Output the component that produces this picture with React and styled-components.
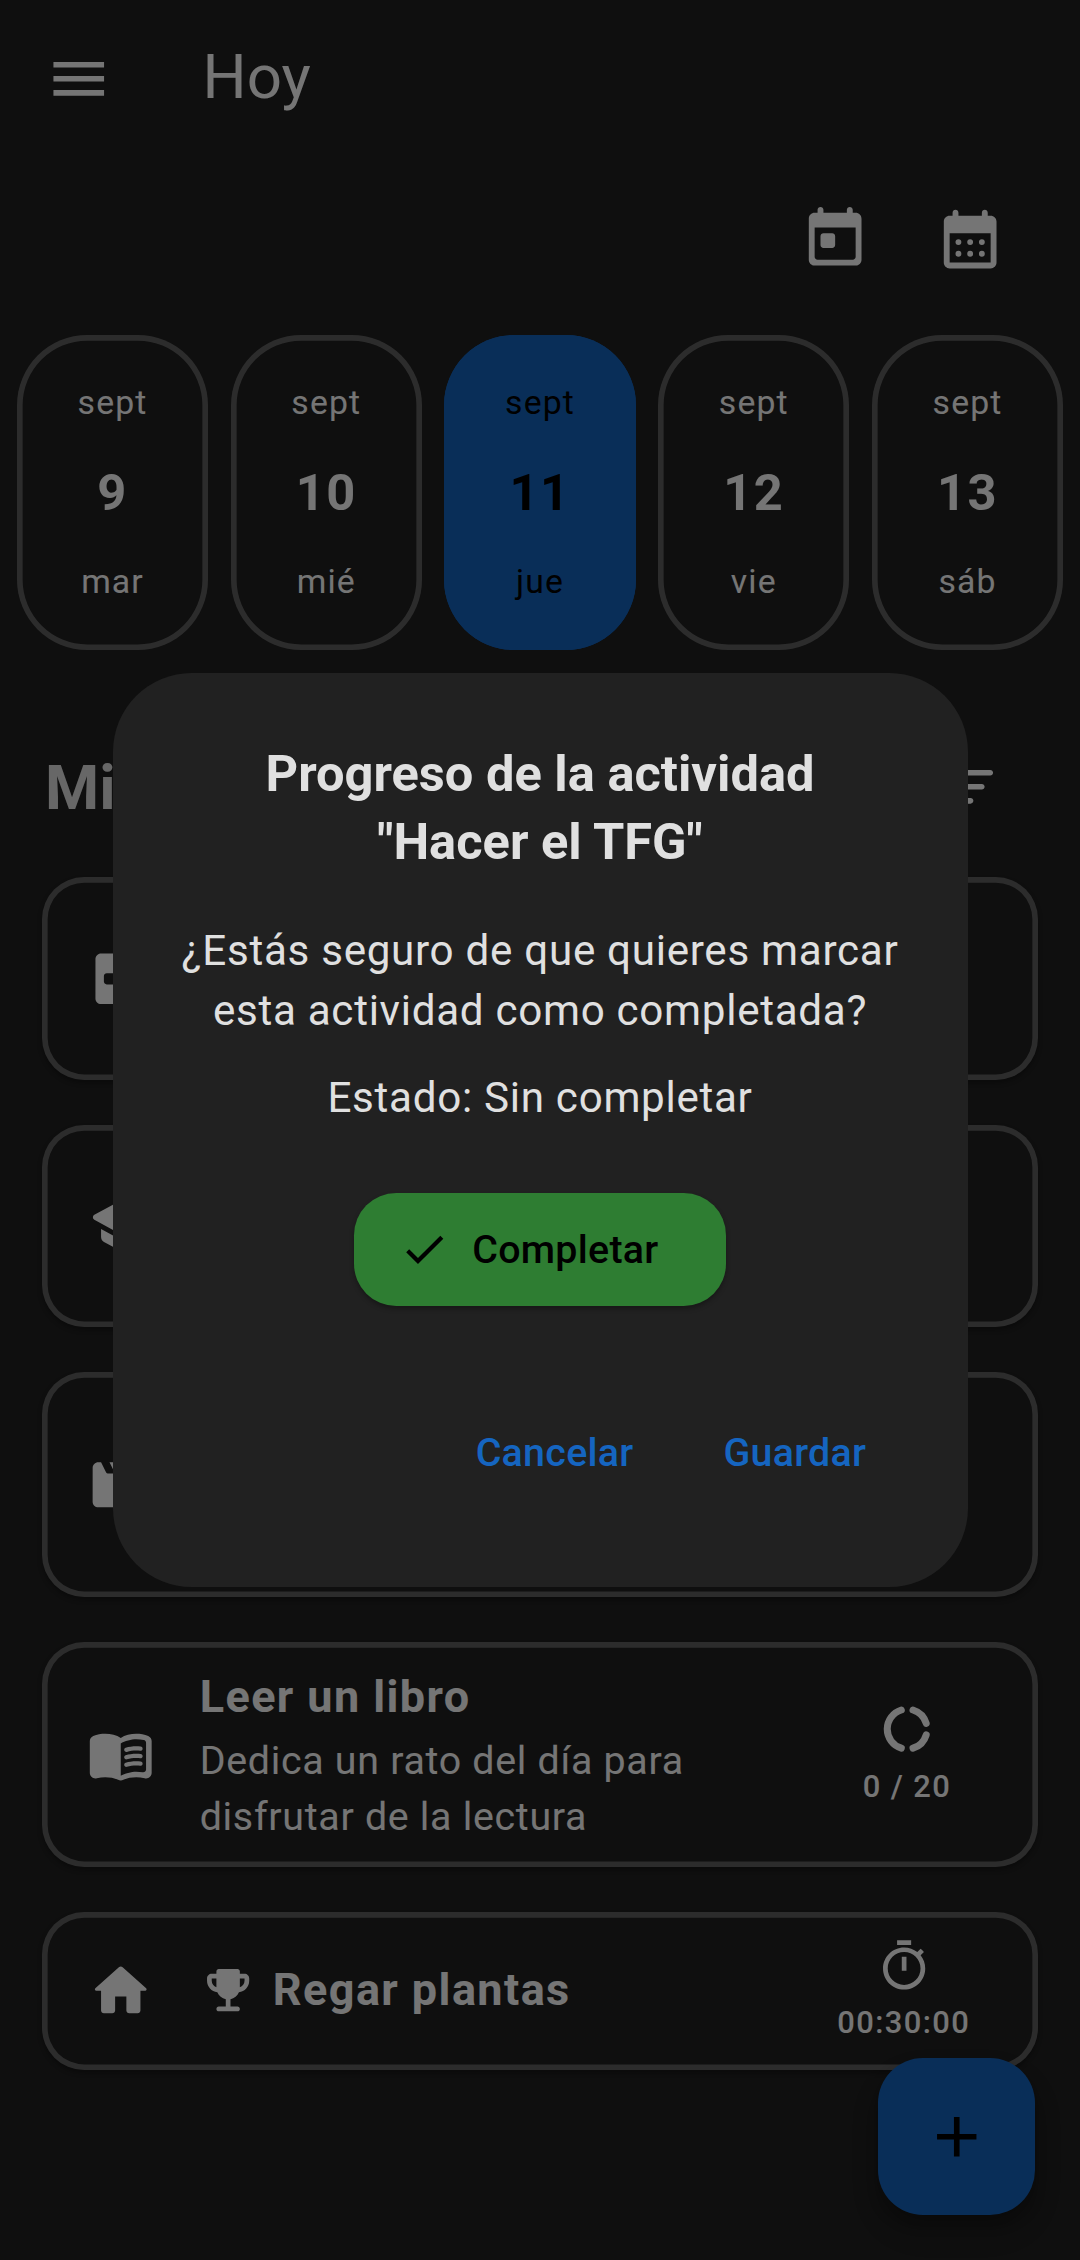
import React from "react";
import styled, { createGlobalStyle } from "styled-components";

const GlobalStyle = createGlobalStyle`
  * { box-sizing: border-box; }
  body { margin: 0; background: #212121; }
  button { font: inherit; border: 0; padding: 0; margin: 0; background: none; letter-spacing: inherit; }
`;

const Screen = styled.div`
  position: relative;
  width: 1080px;
  height: 2260px;
  overflow: hidden;
  background: #212121;
  color: #fff;
  font-family: Roboto, "Liberation Sans", sans-serif;
  letter-spacing: 1.40625px;
`;

const Svg = styled.svg`
  display: block;
  flex: none;
  width: ${(p) => p.$size}px;
  height: ${(p) => p.$size}px;
  fill: currentColor;
`;

const AppBar = styled.header`
  display: flex;
  align-items: center;
  gap: 90px;
  height: 157.5px;
  padding-left: 45px;
`;

const AppTitle = styled.h1`
  margin: 0;
  padding-bottom: 4px;
  font-size: 61.875px;
  line-height: 78px;
  font-weight: 400;
  letter-spacing: 0;
`;

const CalendarActions = styled.div`
  display: flex;
  justify-content: flex-end;
  align-items: center;
  gap: 64.7px;
  height: 163px;
  padding-right: 74.5px;
`;

const IconButton = styled.button`
  display: flex;
  color: inherit;
`;

const DayStrip = styled.div`
  display: flex;
  gap: 22.5px;
  padding: 14.2px 16.9px 0;
`;

const Day = styled.button`
  display: flex;
  flex-direction: column;
  align-items: center;
  justify-content: space-between;
  flex: none;
  width: 191.25px;
  height: 315px;
  padding: 45px 0 46px;
  border-radius: 70.3px;
  line-height: 45px;
  font-size: 33.75px;
  letter-spacing: 1.125px;
  color: ${(p) => (p.$selected ? "#000" : "#fff")};
  background: ${(p) => (p.$selected ? "#1565c0" : "transparent")};
  box-shadow: inset 0 0 0 5.625px ${(p) => (p.$selected ? "#1565c0" : "#616161")};
`;

const DayNumber = styled.span`
  padding-top: 1px;
  font-size: 50.625px;
  font-weight: 700;
  letter-spacing: 1.40625px;
`;

const ListHeader = styled.div`
  display: flex;
  align-items: center;
  justify-content: space-between;
  height: 135px;
  margin-top: 70px;
  padding: 0 78.8px 0 45px;
`;

const Heading = styled.h2`
  margin: 0;
  padding-top: 2px;
  font-size: 61.875px;
  line-height: 78px;
  font-weight: 700;
  letter-spacing: 0;
  color: #e0e0e0;
`;

const List = styled.div`
  display: flex;
  flex-direction: column;
  gap: 45px;
  padding: 22.8px 42.2px 0;
`;

const Card = styled.article`
  display: flex;
  align-items: center;
  gap: 45px;
  height: ${(p) => p.$height}px;
  padding: 0 67.5px 0 45px;
  border-radius: 42.2px;
  background: #212121;
  box-shadow: inset 0 0 0 5.625px #616161, 0 3px 5px rgba(0, 0, 0, 0.3);
`;

const CardBody = styled.div`
  flex: 1;
  min-width: 0;
`;

const CardTitle = styled.h3`
  display: flex;
  align-items: center;
  gap: 16.9px;
  margin: 0;
  padding-bottom: 2px;
  font-size: 45px;
  line-height: 66px;
  font-weight: 700;
`;

const CardText = styled.p`
  width: 520px;
  margin: 1px 0 0;
  font-size: 39.375px;
  line-height: 56.25px;
  letter-spacing: 0.703px;
`;

const Goal = styled.div`
  display: flex;
  flex-direction: column;
  align-items: center;
  min-width: 126.6px;
  font-size: 30.9375px;
  line-height: 45px;
  font-weight: 500;
  gap: 6px;
`;

const Fab = styled.button`
  position: absolute;
  right: 45px;
  bottom: 45px;
  display: flex;
  align-items: center;
  justify-content: center;
  width: 157.5px;
  height: 157.5px;
  border-radius: 45px;
  background: #1565c0;
  color: #000;
  box-shadow: 0 8px 14px rgba(0, 0, 0, 0.25), 0 17px 28px rgba(0, 0, 0, 0.16);
`;

const Backdrop = styled.div`
  position: absolute;
  inset: 0;
  display: flex;
  align-items: center;
  justify-content: center;
  background: rgba(0, 0, 0, 0.54);
`;

const Dialog = styled.section`
  display: flex;
  flex-direction: column;
  align-items: center;
  width: 855px;
  height: 914px;
  padding: 66.5px 67.5px 67.5px;
  border-radius: 78.75px;
  background: #212121;
  color: #e0e0e0;
  text-align: center;
`;

const DialogTitle = styled.h2`
  margin: 0;
  font-size: 50.625px;
  line-height: 68px;
  font-weight: 700;
  letter-spacing: 0;
`;

const DialogText = styled.p`
  margin: ${(p) => p.$top}px 0 0;
  font-size: 42.1875px;
  line-height: 60px;
  letter-spacing: 0.703px;
`;

const CompleteButton = styled.button`
  display: flex;
  align-items: center;
  gap: 22.5px;
  height: 112.5px;
  margin-top: 65px;
  padding: 0 67.5px 0 45px;
  border-radius: 42.2px;
  background: #2e7d32;
  color: #000;
  font-size: 39.375px;
  font-weight: 500;
  letter-spacing: 0.28px;
  box-shadow: 0 3px 5px rgba(0, 0, 0, 0.3);
`;

const DialogActions = styled.div`
  display: flex;
  align-self: stretch;
  justify-content: flex-end;
  gap: 22.5px;
  margin-top: auto;
`;

const TextButton = styled.button`
  height: 135px;
  padding: 0 33.75px;
  color: #1565c0;
  font-size: 39.375px;
  font-weight: 500;
  letter-spacing: 0.28px;
`;

const paths = {
  menu: "M3 18h18v-2H3v2zm0-5h18v-2H3v2zm0-7v2h18V6H3z",
  today:
    "M19 3h-1V2c0-.55-.45-1-1-1s-1 .45-1 1v1H8V2c0-.55-.45-1-1-1s-1 .45-1 1v1H5c-1.11 0-1.99.9-1.99 2L3 19c0 1.1.89 2 2 2h14c1.1 0 2-.9 2-2V5c0-1.1-.9-2-2-2zm-1 16H6c-.55 0-1-.45-1-1V8h14v10c0 .55-.45 1-1 1zM8 10h3c.55 0 1 .45 1 1v3c0 .55-.45 1-1 1H8c-.55 0-1-.45-1-1v-3c0-.55.45-1 1-1z",
  month:
    "M17 2c-.55 0-1 .45-1 1v1H8V3c0-.55-.45-1-1-1s-1 .45-1 1v1H5c-1.11 0-1.99.9-1.99 2L3 20c0 1.1.89 2 2 2h14c1.1 0 2-.9 2-2V6c0-1.1-.9-2-2-2h-1V3c0-.55-.45-1-1-1zm2 18H5V10h14v10zM11 13a1 1 0 1 1 2 0a1 1 0 1 1-2 0zM7 13a1 1 0 1 1 2 0a1 1 0 1 1-2 0zM15 13a1 1 0 1 1 2 0a1 1 0 1 1-2 0zM11 17a1 1 0 1 1 2 0a1 1 0 1 1-2 0zM7 17a1 1 0 1 1 2 0a1 1 0 1 1-2 0zM15 17a1 1 0 1 1 2 0a1 1 0 1 1-2 0z",
  filter:
    "M11 18h2c.55 0 1-.45 1-1s-.45-1-1-1h-2c-.55 0-1 .45-1 1s.45 1 1 1zM3 7c0 .55.45 1 1 1h16c.55 0 1-.45 1-1s-.45-1-1-1H4c-.55 0-1 .45-1 1zm4 6h10c.55 0 1-.45 1-1s-.45-1-1-1H7c-.55 0-1 .45-1 1s.45 1 1 1z",
  hospital:
    "M19 3H5c-1.1 0-1.99.9-1.99 2L3 19c0 1.1.9 2 2 2h14c1.1 0 2-.9 2-2V5c0-1.1-.9-2-2-2zm-2 11h-3v3c0 .55-.45 1-1 1h-2c-.55 0-1-.45-1-1v-3H7c-.55 0-1-.45-1-1v-2c0-.55.45-1 1-1h3V7c0-.55.45-1 1-1h2c.55 0 1 .45 1 1v3h3c.55 0 1 .45 1 1v2c0 .55-.45 1-1 1z",
  school:
    "M5 13.18v2.81c0 .73.4 1.41 1.04 1.76l5 2.73c.6.33 1.32.33 1.92 0l5-2.73c.64-.35 1.04-1.03 1.04-1.76v-2.81l-6.04 3.3c-.6.33-1.32.33-1.92 0L5 13.18zm6.04-9.66-8.43 4.6c-.69.38-.69 1.38 0 1.76l8.43 4.6c.6.33 1.32.33 1.92 0L21 10.09V16c0 .55.45 1 1 1s1-.45 1-1V9.59c0-.37-.2-.7-.52-.88l-9.52-5.19c-.6-.32-1.32-.32-1.92 0z",
  movie:
    "M18 4l1.82 3.64c.08.16-.04.36-.22.36h-1.98c-.38 0-.73-.21-.89-.55L15 4h-2l1.82 3.64c.08.16-.04.36-.22.36h-1.98c-.38 0-.73-.21-.89-.55L10 4H8l1.82 3.64c.08.16-.04.36-.22.36H7.62c-.38 0-.73-.21-.9-.55L5 4H4c-1.1 0-1.99.9-1.99 2L2 18c0 1.1.9 2 2 2h16c1.1 0 2-.9 2-2V5c0-.55-.45-1-1-1h-3z",
  home: "M10 19v-5h4v5c0 .55.45 1 1 1h3c.55 0 1-.45 1-1v-7h1.7c.46 0 .68-.57.33-.87L12.67 3.6c-.38-.34-.96-.34-1.34 0l-8.36 7.53c-.34.3-.13.87.33.87H5v7c0 .55.45 1 1 1h3c.55 0 1-.45 1-1z",
  book: "M17.5 4.5c-1.95 0-4.05.4-5.5 1.5-1.45-1.1-3.55-1.5-5.5-1.5-1.45 0-2.99.22-4.28.79C1.49 5.62 1 6.33 1 7.14v11.28c0 1.3 1.22 2.26 2.48 1.94.98-.25 2.02-.36 3.02-.36 1.56 0 3.22.26 4.56.92.6.3 1.28.3 1.87 0 1.34-.67 3-.92 4.56-.92 1 0 2.04.11 3.02.36 1.26.33 2.48-.63 2.48-1.94V7.14c0-.81-.49-1.52-1.22-1.85-1.28-.57-2.82-.79-4.27-.79zM21 17.23c0 .63-.58 1.09-1.2.98-.75-.14-1.53-.2-2.3-.2-1.7 0-4.15.65-5.5 1.49V8c1.35-.85 3.8-1.5 5.5-1.5.92 0 1.83.09 2.7.28.46.1.8.51.8.98v9.47zM13.98 11.01c-.32 0-.61-.2-.71-.52-.13-.39.09-.82.48-.94 1.54-.5 3.53-.66 5.36-.45.41.05.71.42.66.83-.05.41-.42.71-.83.66-1.62-.19-3.39-.04-4.73.39-.08.01-.16.03-.23.03zM13.98 13.67c-.32 0-.61-.2-.71-.52-.13-.39.09-.82.48-.94 1.53-.5 3.53-.66 5.36-.45.41.05.71.42.66.83-.05.41-.42.71-.83.66-1.62-.19-3.39-.04-4.73.39-.08.02-.16.03-.23.03zM13.98 16.33c-.32 0-.61-.2-.71-.52-.13-.39.09-.82.48-.94 1.53-.5 3.53-.66 5.36-.45.41.05.71.42.66.83-.05.41-.42.7-.83.66-1.62-.19-3.39-.04-4.73.39-.08.02-.16.03-.23.03z",
  trophy:
    "M19 5h-2V4c0-.55-.45-1-1-1H8c-.55 0-1 .45-1 1v1H5c-1.1 0-2 .9-2 2v1c0 2.55 1.92 4.63 4.39 4.94.63 1.5 1.98 2.63 3.61 2.96V19H8c-.55 0-1 .45-1 1s.45 1 1 1h8c.55 0 1-.45 1-1s-.45-1-1-1h-3v-3.1c1.63-.33 2.98-1.46 3.61-2.96C19.08 12.63 21 10.55 21 8V7c0-1.1-.9-2-2-2zM5 8V7h2v3.82C5.84 10.4 5 9.3 5 8zm14 0c0 1.3-.84 2.4-2 2.82V7h2v1z",
  timer:
    "M15 1H9v2h6V1zm-4 13h2V8h-2v6zm8.03-6.61 1.42-1.42c-.43-.51-.9-.99-1.41-1.41l-1.42 1.42C16.07 4.74 14.12 4 12 4c-4.97 0-9 4.03-9 9s4.02 9 9 9 9-4.03 9-9c0-2.12-.74-4.07-1.97-5.61zM12 20c-3.87 0-7-3.13-7-7s3.13-7 7-7 7 3.13 7 7-3.13 7-7 7z",
  check: "M9 16.17 4.83 12l-1.42 1.41L9 19 21 7l-1.41-1.41z",
  add: "M19 13h-6v6h-2v-6H5v-2h6V5h2v6h6v2z",
};

function Icon({ name, size = 67.5 }) {
  return (
    <Svg $size={size} viewBox="0 0 24 24" aria-hidden="true">
      <path d={paths[name]} />
    </Svg>
  );
}

function ProgressRing() {
  return (
    <Svg $size={56.25} viewBox="0 0 56.25 56.25" aria-hidden="true">
      <g fill="none" stroke="currentColor" strokeWidth="7" strokeLinecap="round">
        <path d="M22.3 9A20 20 0 0 0 22.3 47.2" />
        <path d="M34 9A20 20 0 0 1 47.2 22.3" />
        <path d="M47.2 33.9A20 20 0 0 1 34 47.2" />
      </g>
    </Svg>
  );
}

const days = [
  { number: 9, name: "mar" },
  { number: 10, name: "mié" },
  { number: 11, name: "jue", selected: true },
  { number: 12, name: "vie" },
  { number: 13, name: "sáb" },
];

export default function App() {
  return (
    <Screen>
      <GlobalStyle />
      <AppBar>
        <IconButton><Icon name="menu" /></IconButton>
        <AppTitle>Hoy</AppTitle>
      </AppBar>
      <CalendarActions>
        <IconButton><Icon name="today" size={70.3} /></IconButton>
        <IconButton><Icon name="month" size={70.3} /></IconButton>
      </CalendarActions>
      <DayStrip>
        {days.map((d) => (
          <Day key={d.number} $selected={d.selected}>
            <span>sept</span>
            <DayNumber>{d.number}</DayNumber>
            <span>{d.name}</span>
          </Day>
        ))}
      </DayStrip>
      <ListHeader>
        <Heading>Mi</Heading>
        <IconButton><Icon name="filter" /></IconButton>
      </ListHeader>
      <List>
        <Card $height={202.5}><Icon name="hospital" /></Card>
        <Card $height={202.5}><Icon name="school" /></Card>
        <Card $height={225}><Icon name="movie" /></Card>
        <Card $height={225}>
          <Icon name="book" />
          <CardBody>
            <CardTitle>Leer un libro</CardTitle>
            <CardText>Dedica un rato del día para disfrutar de la lectura</CardText>
          </CardBody>
          <Goal>
            <ProgressRing />
            <span>0 / 20</span>
          </Goal>
        </Card>
        <Card $height={157.5}>
          <Icon name="home" />
          <CardBody>
            <CardTitle><Icon name="trophy" size={56.25} />Regar plantas</CardTitle>
          </CardBody>
          <Goal>
            <Icon name="timer" size={56.25} />
            <span>00:30:00</span>
          </Goal>
        </Card>
      </List>
      <Fab><Icon name="add" /></Fab>
      <Backdrop>
        <Dialog role="dialog">
          <DialogTitle>Progreso de la actividad<br />"Hacer el TFG"</DialogTitle>
          <DialogText $top={45.5}>¿Estás seguro de que quieres marcar esta actividad como completada?</DialogText>
          <DialogText $top={27}>Estado: Sin completar</DialogText>
          <CompleteButton><Icon name="check" size={50.625} />Completar</CompleteButton>
          <DialogActions>
            <TextButton>Cancelar</TextButton>
            <TextButton>Guardar</TextButton>
          </DialogActions>
        </Dialog>
      </Backdrop>
    </Screen>
  );
}
